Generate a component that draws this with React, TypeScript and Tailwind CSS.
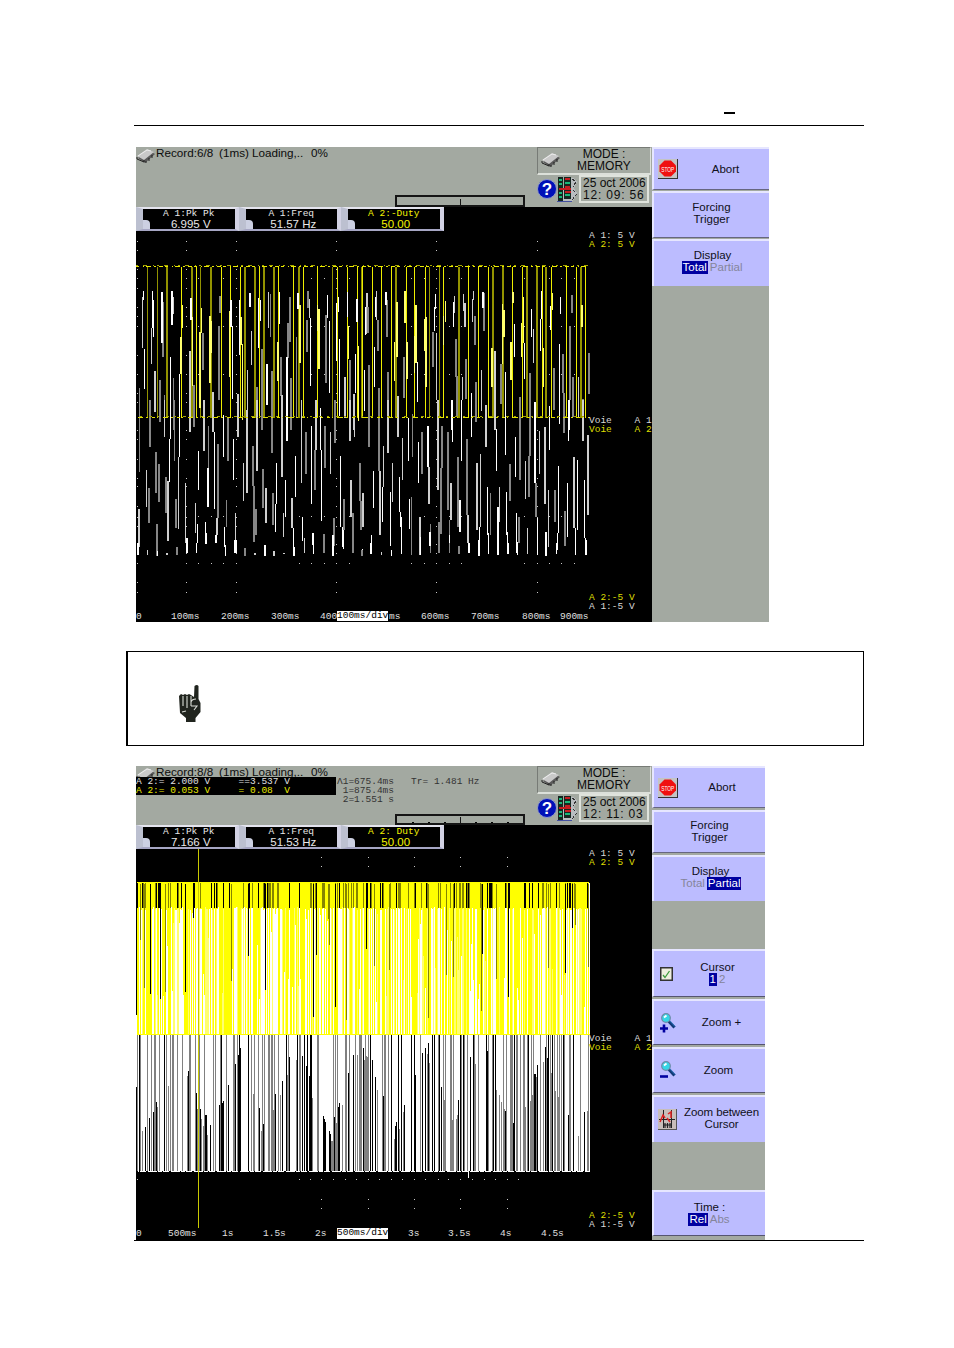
import type { ReactNode } from "react";
import clsx from "clsx";

// Traces of the first record, in thirds of a pixel, split in four tiles.
const tiles = [
  {
    x: -6,
    y: 43,
    olive: [53, 83, 111, 186, 212, 243, 345, 375, 402, 433, 507, 608, 696],
    yellow: [156, 199, 274, 301, 331, 388, 447, 490, 520, 564, 622, 653, 684],
    white:
      "M40 123V150M43 298V417M67 123V235M70 150V260M96 127V280M126 123V225M121 320V450M149 372V450M183 145V210M280 495V540M303 150V230M307 228V447M328 150V315M359 128V172M362 128V172M385 143V295M391 150V213M411 343V465M449 127V223M471 322V450M504 128V178M541 203V407M571 477V540M592 135V205M598 213V428M619 160V332M625 140V187M629 268V497M676 312V430M680 147V215M683 147V215M703 360V483M653 125V200",
    light:
      "M37 140V295M64 235V342M75 363V487M129 140V193M180 302V450M249 425V450M324 432V505M353 360V487M365 243V345M416 127V235M456 435V450M514 455V540M538 148V203M558 472V540M645 380V503M672 432V540M708 175V253M711 130V200",
    gray: "M99 155V320M131 383V540M104 435V540M90 390V515M60 462V540M29 415V540M192 405V527M219 250V360M222 472V540M243 125V155M267 228V450M271 138V188M294 503V540M381 410V540M396 298V540M422 133V262M426 363V540M453 320V437M474 220V325M480 140V275M483 383V540M500 262V503M531 210V305M534 123V175M588 195V400M615 455V540M660 330V540M714 170V248M717 345V540",
    pale: "M153 262V372M157 165V235M188 200V407M210 245V475M215 175V250M240 198V400M245 212V310M298 183V380M333 200V285M337 282V510M444 275V392M510 165V338M562 165V243M567 178V358M656 228V328M686 287V512",
  },
  {
    x: 224,
    y: 43,
    olive: [109, 209, 239, 297, 399, 430, 501, 531, 558, 663],
    yellow: [7, 37, 64, 95, 139, 165, 196, 252, 327, 355, 385, 457, 487, 547, 575, 619, 649, 677],
    white:
      "M13 360V483M17 172V255M44 292V410M47 140V200M78 127V165M145 505V540M172 337V457M223 172V243M226 133V178M276 450V540M281 157V230M334 430V540M369 127V175M436 367V450M463 223V322M493 278V387M514 177V262M541 207V302M545 123V207M568 468V540M571 168V240M598 282V523M602 140V193M627 450V540",
    light:
      "M20 130V172M50 123V210M114 437V450M230 250V450M284 137V188M307 380V450M311 133V183M315 160V230M337 147V217M341 123V150M365 360V483M405 303V450M520 238V340M656 380V503",
    gray: "M24 170V248M27 345V540M54 210V302M57 413V540M81 150V262M84 367V540M132 320V445M158 493V540M219 245V350M234 475V540M288 268V380M291 378V497M318 328V447M345 197V285M348 397V515M372 130V243M378 465V540M423 343V462M480 442V540M510 370V540M525 455V540M582 355V480M609 312V430M612 428V540M630 228V450M636 135V190M639 380V500M669 447V540M687 310V432",
    pale: "M104 275V393M111 155V320M135 123V220M141 275V387M163 258V370M168 165V338M194 208V302M198 200V410M250 197V285M256 153V217M396 295V410M427 163V342M432 180V262M453 275V390M459 127V158M484 220V322M490 140V280M551 295V410M577 130V180M666 165V230",
  },
  {
    x: -6,
    y: 193,
    olive: [],
    yellow: [],
    white:
      "M118 117V245M121 0V117M149 0V172M206 152V270M234 203V320M253 97V328M280 45V172M284 380V440M311 117V240M439 190V312M436 312V397M466 240V350M471 0V122M490 385V467M493 440V467M497 168V290M517 350V423M544 77V313M571 25V150M575 150V363M632 168V380M24 430V465M83 452V467M171 415V458M200 430V460M203 372V430M226 365V433M229 400V433M258 405V430M287 435V467M315 420V460M318 420V460M403 450V467M405 435V467M549 398V435M550 425V463M609 405V467M637 380V440M640 390V448M697 448V467",
    light:
      "M50 210V320M104 0V110M114 243V423M145 172V388M166 250V430M180 0V97M196 310V398M222 0V152M249 0V97M261 355V405M317 340V430M324 0V110M341 190V303M351 30V280M381 0V212M408 263V368M456 0V232M460 338V412M486 295V385M514 0V250M558 0V150M602 97V222M660 0V122M663 240V350M673 0V110M699 280V380M27 328V440M53 450V465M111 458V465M375 458V465M432 453V467M462 458V462M523 415V460",
    gray: "M29 0V215M60 0V142M57 263V368M78 155V280M87 193V307M108 230V338M134 0V182M138 298V385M192 0V80M236 77V207M264 132V355M294 52V182M290 300V382M369 138V258M372 258V427M378 328V405M396 0V87M399 208V323M426 0V158M430 278V375M528 97V223M555 150V270M585 77V203M612 355V437M615 0V130M642 298V390M669 340V458M690 190V303M694 303V390M717 0V140M81 372V467M141 440V465M345 443V467M582 403V458",
    pale: "",
  },
  {
    x: 224,
    y: 193,
    olive: [],
    yellow: [],
    white:
      "M40 213V323M67 262V365M91 277V437M118 230V337M121 337V380M124 350V463M145 57V182M149 298V388M176 127V250M204 77V200M277 0V127M300 300V395M304 0V182M327 430V460M334 0V110M355 420V467M358 380V467M382 260V405M385 400V463M409 87V212M414 320V465M412 360V410M436 0V165M439 277V405M443 397V463M446 430V463M466 110V232M470 340V460M473 425V465M525 5V250M532 353V465M558 397V468M568 20V150M595 198V400M589 430V463M592 400V450M622 250V410M626 0V123M646 383V465M653 180V390M673 240V415M676 415V465M680 420V465M35 405V463M33 430V463M94 450V467M182 410V465M210 395V437M268 405V430",
    light:
      "M9 280V382M60 212V405M71 138V262M84 0V160M98 190V307M114 0V110M128 115V240M180 350V465M207 200V313M234 0V270M273 250V360M324 345V430M351 190V390M362 162V382M378 15V142M405 0V90M419 260V365M497 182V297M502 385V463M538 93V222M555 80V313M565 270V440M642 172V383M669 0V122M684 105V345M64 455V465",
    gray: "M1 190V388M27 0V142M57 0V212M158 45V172M155 290V465M186 97V222M246 77V203M243 203V403M237 365V460M264 97V330M269 360V458M294 172V382M321 118V345M392 280V405M450 192V303M477 350V428M480 0V240M507 168V290M510 0V168M528 250V350M585 270V367M612 0V100M615 332V437M6 450V467M212 372V460M297 438V463",
    pale: "",
  },
];

const gridX = [1, 50, 100, 200, 300, 401];
const gridY = [34, 43, 62, 71, 81, 100, 109, 119, 148, 167, 186, 195, 223, 232, 252, 271, 279, 299, 310, 319, 337, 346, 356, 375, 385];
const minorX = [62, 75, 87, 163, 175, 188, 213, 275, 288, 313, 325, 388, 413, 425, 438];

function Dots({ xs, ys }: { xs: number[]; ys: number[] }) {
  return <path fill="#c8c8c8" d={xs.map((x) => ys.map((y) => `M${x} ${y}h1v1h-1z`).join("")).join("")} />;
}

function TotalWave() {
  return (
    <svg className="block h-[415px] w-[516px]" viewBox="0 0 516 415" shapeRendering="crispEdges" fill="none">
      <Dots xs={gridX} ys={gridY} />
      <Dots xs={minorX} ys={[71, 119, 167, 309, 356]} />
      {tiles.map((t) => (
        <g key={`${t.x},${t.y}`} transform={`translate(${t.x} ${t.y}) scale(.33333)`}>
          <path stroke="#868686" strokeWidth="5" d={t.gray} />
          <path stroke="#939300" strokeWidth="5" d={t.olive.map((x) => `M${x} 50V503`).join("")} />
          <path stroke="#eded00" strokeWidth="3" d={t.yellow.map((x) => `M${x} 50V503`).join("")} />
          <path stroke="#ffff6e" strokeWidth="4" d={t.pale} />
          <path stroke="#cfcfcf" strokeWidth="3.500" d={t.light} />
          <path stroke="#fff" strokeWidth="3.500" d={t.white} />
        </g>
      ))}
      <path stroke="#eaea00" strokeDasharray="3 4 1 2 5 3 2 3 4 2" d="M0 59.5H452" />
      <path stroke="#a5a500" strokeDasharray="2 5 4 6 1 3" d="M0 58.5H452" />
      <path stroke="#e0e000" strokeDasharray="5 3 2 4 3 2 1 5" d="M2 210.5H454" />
      <path stroke="#a5a500" strokeDasharray="2 7 3 5" d="M4 209.5H454" />
    </svg>
  );
}

function noise(n: number) {
  const v = Math.sin(n * 127.1 + 11.7) * 43758.5453;
  return v - Math.floor(v);
}

// Lower envelope of the dark gaps in the dense record
const valleys = [
  [0, 320], [16, 275], [42, 60], [58, 200], [75, 320], [95, 150], [105, 70], [128, 310], [158, 60], [170, 130],
  [194, 330], [222, 50], [232, 80], [258, 320], [290, 50], [318, 290], [332, 100], [350, 60], [374, 300],
  [390, 230], [408, 70], [440, 330], [453, 230],
];

function valley(x: number) {
  const i = Math.max(1, valleys.findIndex(([vx]) => vx >= x));
  const [x0, y0] = valleys[i - 1];
  const [x1, y1] = valleys[i];
  return 195 + (y0 + ((y1 - y0) * (x - x0)) / (x1 - x0)) / 3;
}

function densePaths() {
  const p = { white: "", pale: "", olive: "", gray: "", black: "" };
  for (let x = 1; x < 453; x++) {
    const a = noise(x);
    const b = noise(x + 600);
    const c = noise(x + 1300);
    const start = 82 + (c > 0.8 ? Math.round(b * 100) : Math.round(b * 3));
    if (a < 0.38) p.white += `M${x} ${start}h1V209h-1z`;
    else if (a < 0.54) p.pale += `M${x} ${start}h1V209h-1z`;
    else if (a > 0.94) {
      const end = 90 + Math.round(b * 112);
      p[c > 0.4 ? "olive" : "black"] += `M${x} 59h1V${end}h-1z`;
    }
    if (c < 0.16) p.olive += `M${x} 58h1V83h-1z`;
    else if (c < 0.27) p.black += `M${x} 58h1V83h-1z`;

    const d = noise(x + 2100);
    const e = noise(x + 3300);
    if (d < 0.22) p.gray += `M${x} 210h1V346h-1z`;
    else if (d < 0.31) p.black += `M${x} 210h1V346h-1z`;
    else if (d < 0.55) {
      const top = Math.max(211, Math.round(valley(x) + e * 18));
      p[e > 0.5 ? "gray" : "black"] += `M${x} ${top}h1V346h-1z`;
    }
  }
  return p;
}

const dense = densePaths();

function PartialWave() {
  return (
    <svg className="block h-[415px] w-[516px]" viewBox="0 0 516 415" shapeRendering="crispEdges">
      <path fill="#ff0" d="M1 57H453V209H1z" />
      <path fill="#fff" d="M2 210H454V347H2z" />
      <path fill="#fff" d={dense.white} />
      <path fill="#ffff70" d={dense.pale} />
      <path fill="#858500" d={dense.olive} />
      <path fill="#808080" d={dense.gray} />
      <path fill="#000" d={dense.black} />
      <path stroke="#ff0" d="M1 57.5H453M1 209.5H454" />
      <path stroke="#000" strokeDasharray="1 6 2 9 1 4" d="M1 56.5H453M3 346.5H453" />
      <path stroke="#fff" d="M.5 190V262M453.5 58V209M332.5 346V353" />
      <path stroke="#c9c900" d="M62.5 22V403" />
      <Dots xs={[185, 232, 278, 324, 371]} ys={[32, 41, 374, 383]} />
      <Dots xs={[1, 163, 174, 185, 197, 209, 220, 232, 243, 255, 266, 278, 289, 302, 312, 324, 336, 348, 359, 371, 382]} ys={[354]} />
    </svg>
  );
}

function ChipIcon({ className }: { className?: string }) {
  return (
    <svg className={className} viewBox="0 0 20 16">
      <path d="M2 10 12 2l7 4-10 9z" fill="#5a5a5a" />
      <path d="M1 8 11 1l7 3L8 12z" fill="#c9c9c9" />
      <path d="M2 8 11 2l4 1" fill="none" stroke="#eee" />
      <path d="M1 9v2l7 3v-2M10 13v2M13 10v3M16 7v3" fill="none" stroke="#222" />
    </svg>
  );
}

function StopIcon() {
  return (
    <svg className="h-5 w-5" viewBox="0 0 20 20">
      <path d="M0 0h20v20H0z" fill="#333" />
      <path d="M0 0h19v19H0z" fill="#c4c4c4" />
      <path d="M6.500 1.500h6.500l5 5v6l-5 5H6.500l-5-5v-6z" fill="#f01010" />
      <text x="9.800" y="12.500" textAnchor="middle" fontSize="8" textLength="13" lengthAdjust="spacingAndGlyphs" fill="#fff" fontFamily="Liberation Sans, sans-serif">
        STOP
      </text>
    </svg>
  );
}

function CheckIcon() {
  return (
    <svg className="ml-0.5 h-[14px] w-[13px]" viewBox="0 0 13 14">
      <path d="M.75.75h11.500v12.500H.75z" fill="#efefdf" stroke="#333" strokeWidth="1.500" />
      <path d="m3 8 2 2.500L9.500 4" fill="none" stroke="#3c9a3c" strokeWidth="1.300" />
    </svg>
  );
}

function MagnifierIcon({ plus }: { plus?: boolean }) {
  return (
    <svg className="ml-0.5 h-5 w-4" viewBox="0 0 16 20">
      <path d="m8.500 8 6 6.500" stroke="#123a78" strokeWidth="3" />
      <path d="m9 7 6 6.500" stroke="#2f78c0" strokeWidth="1" />
      <circle cx="6" cy="5" r="4.300" fill="#35d6e6" stroke="#6d8aa8" strokeWidth="1.200" />
      <path d="M4 4.500 6.500 2.500" stroke="#fff" strokeWidth="1.800" />
      <path d={plus ? "M0 15.500h8M4 11.500v8" : "M0 15.500h8"} stroke="#0000a0" strokeWidth="2.600" />
    </svg>
  );
}

function CursorZoomIcon() {
  return (
    <svg className="h-[21px] w-[19px]" viewBox="0 0 19 21">
      <path d="M0 0h19v21H0z" fill="#555" />
      <path d="M0 0h18v20H0z" fill="#c8beba" />
      <path d="M5.500 1v18M13.500 1v18M1 10.500h16" stroke="#222" />
      <path d="m2 13 3-7 2 3M9 9l3 4M10 5l3-2v6" fill="none" stroke="#e02020" strokeWidth="1.500" />
      <path d="M5 16h9M7 14v5M9.500 14v5M12 14v5" stroke="#222" strokeWidth="1.200" />
    </svg>
  );
}

function HelpIcon() {
  return (
    <div className="flex h-[20px] w-[20px] items-center justify-center rounded-full border border-[#8f99c8] bg-[#0010b8] text-[17px] leading-none font-bold text-white">
      ?
    </div>
  );
}

function NetworkIcon() {
  return (
    <svg className="h-[25px] w-[20px]" viewBox="0 0 20 25" shapeRendering="crispEdges">
      <path d="M10 1h7l3 4-3 6 3 5-4 8H2z" fill="#b9bdc0" />
      <path d="M1 0h5v24H1zM7 0h7v22H7z" fill="#152720" />
      <path d="M2 3h3M2 7h3M2 16h3M2 20h3M8 6h5M8 18h5" stroke="#19b879" strokeWidth="2" />
      <path d="M8 2h5M8 10h5M2 12h12M8 15h6" stroke="#c51b20" strokeWidth="1.600" />
      <path d="m15 2 4 3-3 5m0 3 4 4-5 6" fill="none" stroke="#333" strokeDasharray="3 2" />
      <path d="M0 24.500h15" stroke="#4350a0" />
    </svg>
  );
}

function HandIcon() {
  return (
    <svg className="h-10 w-[26px]" viewBox="0 0 26 40">
      <path d="M17.500 2q2.500-2 4 0v13l2 4v9l-5 6v4H9v-4l-6-5-1-17 2-2 2 1 2-1 2 1 2-1 2 1 3 2z" fill="#20241e" />
      <path d="M6 12v10M10 12v12M14 12v10m0-4q1-3 5-3M14 22h6l-3 4M5 28l4-1" fill="none" stroke="#d9dcd6" strokeWidth="1.100" />
    </svg>
  );
}

function SideButton({ className, icon, children }: { className: string; icon?: ReactNode; children: ReactNode }) {
  return (
    <div
      className={clsx(
        "relative flex shrink-0 flex-col items-center justify-center border-t-2 border-l-2 border-t-[#e6e6ff] border-l-[#e6e6ff] bg-[#bcbcff] text-[11.5px] leading-[12px] text-[#101020]",
        className,
      )}
    >
      {icon && <div className="absolute inset-y-0 left-1 flex items-center">{icon}</div>}
      {children}
    </div>
  );
}

function Choice({ items, active }: { items: string[]; active: number }) {
  return (
    <div className="flex gap-px">
      {items.map((item, i) => (
        <span key={item} className={clsx("px-px leading-[13px]", i === active ? "bg-[#0000a0] text-white" : "text-[#85859a]")}>
          {item}
        </span>
      ))}
    </div>
  );
}

function Measure({ label, value, yellow }: { label: string; value: string; yellow?: boolean }) {
  return (
    <div className="relative h-6 w-[102.500px] border-t-2 border-r-4 border-b-2 border-l-[7px] border-t-[#e4e4ee] border-r-[#d2d2e4] border-b-[#a6a6c4] border-l-[#bcc0d0] bg-black">
      <div className="absolute bottom-0 left-0 h-[9px] w-[7px] rounded-tr bg-[#ccd0e2]" />
      <div className={clsx("flex flex-col items-center", yellow ? "text-[#f4f400]" : "text-[#e8e8e8]")}>
        <span className="h-[9px] font-['Liberation_Mono'] text-[9.500px] leading-[9px] whitespace-pre">{label}</span>
        <span className="pl-1 text-[11.500px] leading-[12px]">{value}</span>
      </div>
    </div>
  );
}

const mono = "font-['Liberation_Mono'] text-[9.5px] leading-[9px] whitespace-pre";

function Label({ className, children }: { className: string; children: ReactNode }) {
  return <span className={clsx("absolute", mono, className)}>{children}</span>;
}

function PlotLabels() {
  return (
    <>
      <Label className="top-[24px] left-[453px] text-[#d8d8d8]">A 1: 5 V</Label>
      <Label className="top-[33px] left-[453px] text-[#dede00]">A 2: 5 V</Label>
      <Label className="top-[209px] left-[453px] text-[#d8d8d8]">Voie    A 1</Label>
      <Label className="top-[218px] left-[453px] text-[#dede00]">Voie    A 2</Label>
      <Label className="top-[386px] left-[453px] text-[#dede00]">A 2:-5 V</Label>
      <Label className="top-[395px] left-[453px] text-[#d8d8d8]">A 1:-5 V</Label>
    </>
  );
}

function Ticks() {
  return (
    <>
      <i className="h-px w-0.5 bg-black" />
      <i className="h-px w-0.5 bg-black" />
      <i className="h-px w-0.5 bg-black" />
    </>
  );
}

type ScreenProps = {
  record: string;
  time: string;
  cursor?: boolean;
  values: string[];
  labels: string[];
  wave: ReactNode;
  axis: ReactNode;
};

function Screen({ record, time, cursor, values, labels, wave, axis }: ScreenProps) {
  return (
    <div className="w-[516px] shrink-0 bg-black">
      <div className={clsx("flex bg-[#a3a9a1]", cursor ? "h-[59px]" : "h-[60px]")}>
        <div className="relative w-[401px]">
          <div className="flex h-[11px] text-[11.700px] leading-[11px] whitespace-nowrap text-[#0c0c0c]">
            <ChipIcon className="mt-px h-4 w-5" />
            <span className="w-[63px]">Record:{record}</span>
            <span className="w-[33px]">(1ms)</span>
            <span className="w-[59px]">Loading,..</span>
            <span>0%</span>
          </div>
          {cursor && (
            <div className={clsx("relative flex", mono)}>
              <div className="h-[18px] w-[200px] bg-black">
                <div className="text-[#e2e2e2]">A 2:= 2.000 V     ==3.537 V</div>
                <div className="text-[#eaea00]">A 2:= 0.053 V     = 0.08  V</div>
              </div>
              <div className="pl-px text-[#333]">
                <div>Λ1=675.4ms   Tr= 1.481 Hz</div>
                <div> 1=875.4ms</div>
                <div> 2=1.551 s</div>
              </div>
            </div>
          )}
          <div
            className={clsx(
              "absolute bottom-0 left-[259px] flex w-[130px] items-end justify-center border-2 border-[#151515]",
              cursor ? "h-[11px] gap-[14px]" : "h-3",
            )}
          >
            {cursor && <Ticks />}
            <i className="h-1.5 w-px bg-[#151515]" />
            {cursor && <Ticks />}
          </div>
        </div>
        <div className="w-[114px] text-[12px] text-[#0c0c0c]">
          <div className="flex h-7 border border-b-2 border-t-[#777b76] border-r-[#dce0da] border-b-[#dce0da] border-l-[#777b76]">
            <ChipIcon className="mt-1 ml-[3px] h-4 w-5" />
            <div className="ml-px w-[84px] text-center leading-[12px]">
              <div>MODE :</div>
              <div>MEMORY</div>
            </div>
          </div>
          <div className="flex items-center">
            <HelpIcon />
            <NetworkIcon />
            <div className="ml-0.5 h-[28px] w-[70px] border-2 border-[#dfe3dc] pl-0.5 leading-[12px] whitespace-nowrap">
              <div>25 oct 2006</div>
              <div className="tracking-[0.8px]">{time}</div>
            </div>
          </div>
        </div>
      </div>
      <div className="relative h-[415px]">
        {wave}
        <div className="absolute top-0 left-0 flex">
          {values.map((value, i) => (
            <Measure key={value} label={labels[i]} value={value} yellow={i === 2} />
          ))}
        </div>
        <PlotLabels />
        {axis}
      </div>
    </div>
  );
}

export default function App() {
  return (
    <main className="h-[1348px] w-[954px] overflow-hidden bg-white font-['Liberation_Sans',sans-serif]">
      <div className="ml-[134px] flex h-[126px] w-[730px] items-end border-b border-black">
        <div className="mb-[11px] ml-[590px] h-0.5 w-[11px] bg-black" />
      </div>

      <section className="mt-[21px] ml-[136px] flex h-[475px]">
        <Screen
          record="6/8"
          time="12: 09: 56"
          values={["6.995 V", "51.57 Hz", "50.00"]}
          labels={["A 1:Pk Pk", "A 1:Freq", "A 2:-Duty"]}
          wave={<TotalWave />}
          axis={
            <div className="text-[#e0e0e0]">
              <Label className="top-[405px] left-0">0</Label>
              <Label className="top-[405px] left-[35px]">100ms</Label>
              <Label className="top-[405px] left-[85px]">200ms</Label>
              <Label className="top-[405px] left-[135px]">300ms</Label>
              <Label className="top-[405px] left-[184px]">400</Label>
              <Label className="top-[405px] left-[253px]">ms</Label>
              <Label className="top-[405px] left-[285px]">600ms</Label>
              <Label className="top-[405px] left-[335px]">700ms</Label>
              <Label className="top-[405px] left-[386px]">800ms</Label>
              <Label className="top-[405px] left-[424px]">900ms</Label>
              <Label className="top-[404px] left-[201px] h-[10px] w-[51px] bg-white text-black">100ms/div</Label>
            </div>
          }
        />
        <aside className="flex w-[117px] flex-col bg-[#a3a9a1]">
          <SideButton className="h-[43px] border-b border-b-[#666680] pl-7" icon={<StopIcon />}>
            Abort
          </SideButton>
          <SideButton className="mt-px h-[47px] border-b border-b-[#666680] pb-1">
            <span>Forcing</span>
            <span>Trigger</span>
          </SideButton>
          <SideButton className="mt-px h-[47px] pb-1 pl-0.5">
            <span>Display</span>
            <Choice items={["Total", "Partial"]} active={0} />
          </SideButton>
        </aside>
      </section>

      <div className="mt-[29px] ml-[126px] flex h-[95px] w-[738px] border border-l-2 border-black">
        <div className="mt-8 ml-[49px]">
          <HandIcon />
        </div>
      </div>

      <div className="mt-5 ml-[134px] w-[730px] border-b border-black">
        <section className="ml-0.5 flex h-[474px]">
          <Screen
            record="8/8"
            time="12: 11: 03"
            cursor
            values={["7.166 V", "51.53 Hz", "50.00"]}
            labels={["A 1:Pk Pk", "A 1:Freq", "A 2: Duty"]}
            wave={<PartialWave />}
            axis={
              <div className="text-[#e0e0e0]">
                <Label className="top-[404px] left-0">0</Label>
                <Label className="top-[404px] left-[32px]">500ms</Label>
                <Label className="top-[404px] left-[86px]">1s</Label>
                <Label className="top-[404px] left-[127px]">1.5s</Label>
                <Label className="top-[404px] left-[179px]">2s</Label>
                <Label className="top-[404px] left-[272px]">3s</Label>
                <Label className="top-[404px] left-[312px]">3.5s</Label>
                <Label className="top-[404px] left-[364px]">4s</Label>
                <Label className="top-[404px] left-[405px]">4.5s</Label>
                <Label className="top-[403px] left-[201px] h-[11px] w-[51px] bg-white text-black">500ms/div</Label>
              </div>
            }
          />
          <aside className="flex w-[113px] flex-col bg-[#a3a9a1]">
            <SideButton className="h-[42px] border-b border-b-[#666680] pb-0.5 pl-[25px]" icon={<StopIcon />}>
              Abort
            </SideButton>
            <SideButton className="mt-[2px] h-[43px] border-b border-b-[#666680] pb-0.5">
              <span>Forcing</span>
              <span>Trigger</span>
            </SideButton>
            <SideButton className="mt-[2px] h-[46px] pb-1 pl-0.5">
              <span>Display</span>
              <Choice items={["Total", "Partial"]} active={1} />
            </SideButton>
            <SideButton className="mt-12 h-[48px] border-b border-b-[#555570] pl-4" icon={<CheckIcon />}>
              <span>Cursor</span>
              <Choice items={["1", "2"]} active={0} />
            </SideButton>
            <SideButton className="mt-[2px] h-[46px] border-b border-b-[#555570] pb-0.5 pl-6" icon={<MagnifierIcon plus />}>
              Zoom +
            </SideButton>
            <SideButton className="mt-[2px] h-[46px] border-b border-b-[#555570] pb-0.5 pl-[18px]" icon={<MagnifierIcon />}>
              Zoom
            </SideButton>
            <SideButton className="mt-[2px] h-[47px] pb-1 pl-[24px] tracking-[-0.1px] whitespace-nowrap" icon={<CursorZoomIcon />}>
              <span>Zoom between</span>
              <span>Cursor</span>
            </SideButton>
            <SideButton className="mt-12 h-[46px] border-b border-b-[#555570]">
              <span>Time :</span>
              <Choice items={["Rel", "Abs"]} active={0} />
            </SideButton>
          </aside>
        </section>
      </div>
    </main>
  );
}
